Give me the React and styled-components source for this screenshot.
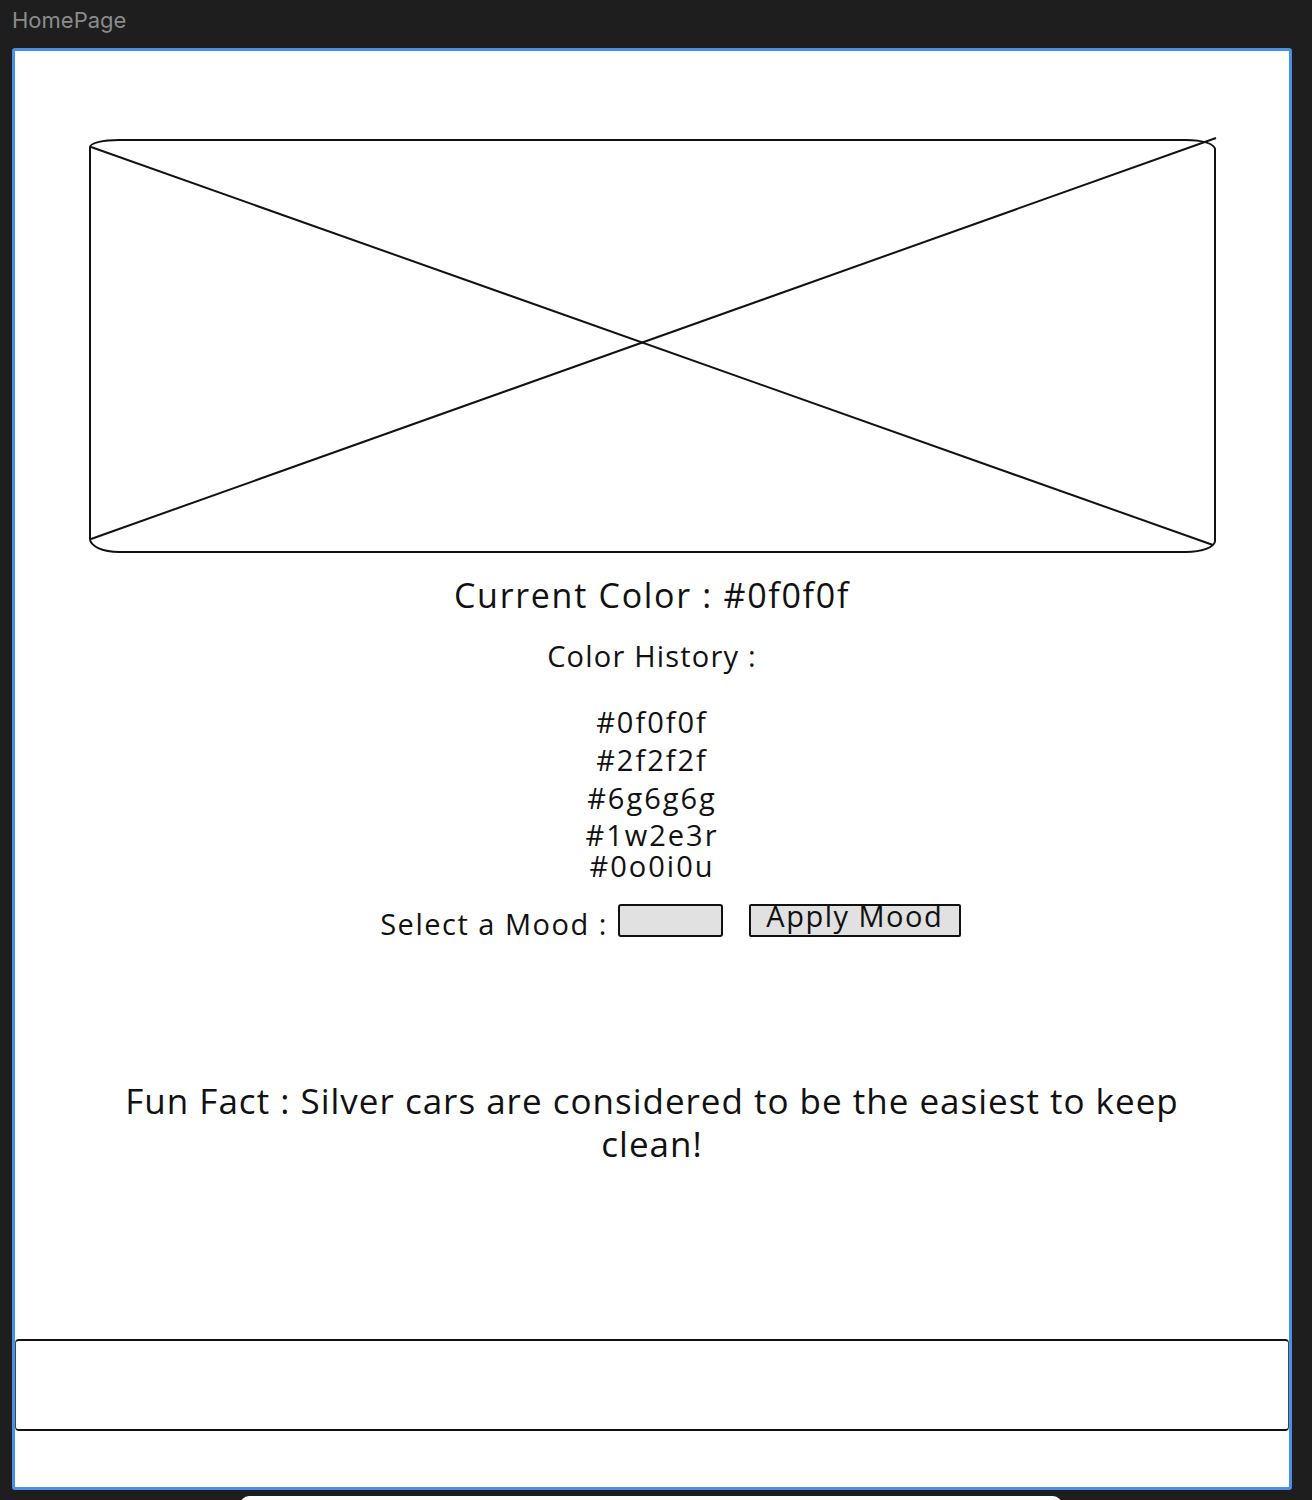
import React from 'react'
import styled, { createGlobalStyle } from 'styled-components'

const Global = createGlobalStyle`
html, body {
  margin: 0;
  padding: 0;
  background: #1e1e1e;
}
body {
  font-family: 'Open Sans', 'DejaVu Sans', sans-serif;
}
`

const Screen = styled.div`
width: 1312px;
height: 1500px;
display: flex;
flex-direction: column;
background: #1e1e1e;
overflow: hidden;
position: relative;
`

const TitleBar = styled.div`
height: 46px;
display: flex;
align-items: center;
padding-left: 12px;
padding-bottom: 6px;
box-sizing: border-box;
margin-bottom: 2px;
font-family: Inter, 'Liberation Sans', sans-serif;
font-size: 22px;
color: #8b8b8b;
`

const Frame = styled.div`
margin: 0 20px 0 12px;
height: 1442px;
box-sizing: border-box;
border: 3px solid #4a90e6;
border-radius: 3px;
background: #fff;
display: flex;
flex-direction: column;
align-items: center;
color: #111;
letter-spacing: 1.5px;
`

const Placeholder = styled.div`
position: relative;
margin-top: 88px;
width: 1127px;
height: 414px;
box-sizing: border-box;
border: 2px solid #111;
border-radius: 30px 30px 30px 30px / 8px 10px 12px 14px;

svg {
  position: absolute;
  left: -2px;
  top: -2px;
  overflow: visible;
}
`

const CurrentColor = styled.div`
margin-top: 21px;
font-size: 34px;
line-height: 42px;
letter-spacing: 1.7px;
`

const HistoryTitle = styled.div`
margin-top: 20px;
font-size: 29px;
line-height: 40px;
letter-spacing: 1.2px;
`

const HistoryList = styled.div`
margin-top: 27px;
display: flex;
flex-direction: column;
align-items: center;
`

const HistoryItem = styled.div`
font-size: 29px;
line-height: ${p => p.lh}px;
letter-spacing: 2px;
`

const MoodRow = styled.div`
margin-top: 17px;
margin-left: 37px;
display: flex;
align-items: center;
`

const MoodLabel = styled.span`
font-size: 29px;
line-height: 40px;
margin-top: 8px;
margin-right: 10px;
`

const MoodInput = styled.div`
width: 105px;
height: 33px;
box-sizing: border-box;
background: #e1e1e1;
border: 2px solid #111;
border-radius: 3px;
`

const ApplyButton = styled.div`
margin-left: 26px;
width: 212px;
height: 33px;
box-sizing: border-box;
background: #e1e1e1;
border: 2px solid #111;
border-radius: 2px;
font-size: 29px;
line-height: 20px;
text-align: center;
`

const FunFact = styled.div`
margin-top: 135px;
width: 1080px;
text-align: center;
font-size: 35px;
line-height: 43px;
letter-spacing: 1px;
`

const Footer = styled.div`
margin-top: 174px;
align-self: stretch;
height: 92px;
box-sizing: border-box;
border-top: 2px solid #111;
border-bottom: 2px solid #111;
border-left: 1px solid #444;
border-right: 1px solid #444;
border-radius: 4px;
`

const Peek = styled.div`
position: absolute;
left: 240px;
width: 822px;
bottom: -14px;
height: 18px;
background: #fff;
border-radius: 12px;
`

const history = [
  { c: '#0f0f0f', lh: 38 },
  { c: '#2f2f2f', lh: 38 },
  { c: '#6g6g6g', lh: 38 },
  { c: '#1w2e3r', lh: 36 },
  { c: '#0o0i0u', lh: 26 },
]

export default function App() {
  return (
    <>
      <Global />
      <Screen>
        <TitleBar>HomePage</TitleBar>
        <Frame>
          <Placeholder>
            <svg width='1127' height='414'>
              <line x1='2' y1='8' x2='1124' y2='406' stroke='#111' strokeWidth='2' />
              <line x1='2' y1='400' x2='1127' y2='-1' stroke='#111' strokeWidth='2' />
            </svg>
          </Placeholder>
          <CurrentColor>Current Color : #0f0f0f</CurrentColor>
          <HistoryTitle>Color History :</HistoryTitle>
          <HistoryList>
            {history.map(h => (
              <HistoryItem key={h.c} lh={h.lh}>{h.c}</HistoryItem>
            ))}
          </HistoryList>
          <MoodRow>
            <MoodLabel>Select a Mood :</MoodLabel>
            <MoodInput />
            <ApplyButton>Apply Mood</ApplyButton>
          </MoodRow>
          <FunFact>Fun Fact : Silver cars are considered to be the easiest to keep clean!</FunFact>
          <Footer />
        </Frame>
        <Peek />
      </Screen>
    </>
  )
}
